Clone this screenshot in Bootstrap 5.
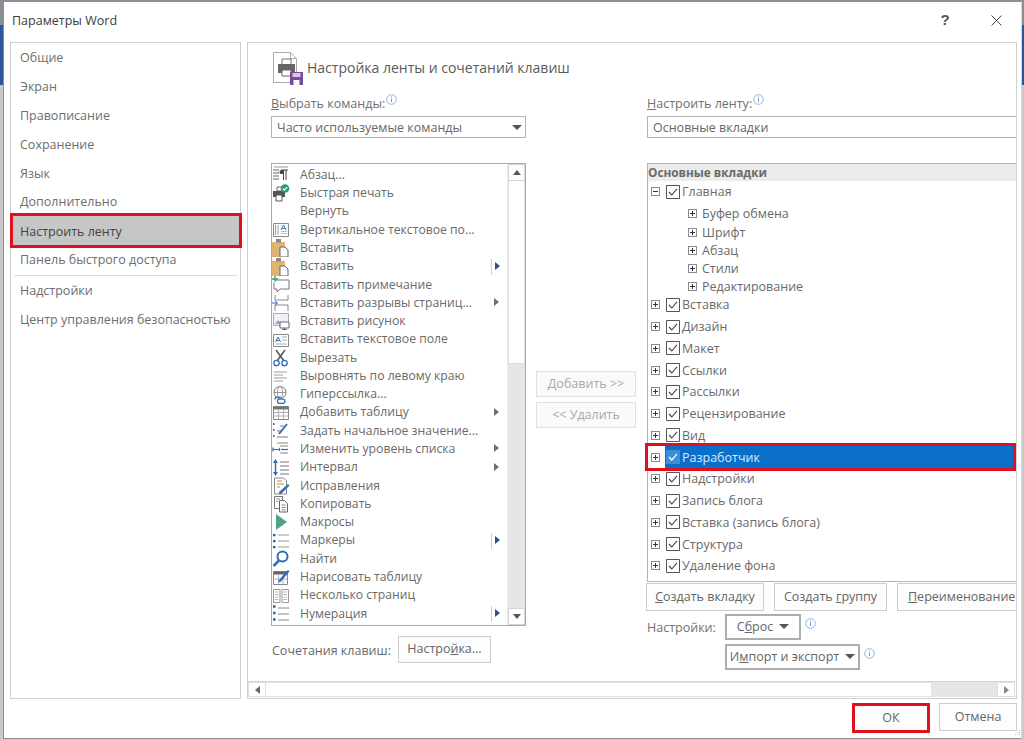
<!DOCTYPE html>
<html lang="ru">
<head>
<meta charset="utf-8">
<title>Параметры Word</title>
<link href="https://cdn.jsdelivr.net/npm/bootstrap@5.3.0/dist/css/bootstrap.min.css" rel="stylesheet">
<style>
html,body{height:740px;overflow:hidden}
body{background:linear-gradient(#8a8f96 0,#8a8f96 25px,#2b579a 25px,#2b579a 85px,#c9c9c9 85px);font-family:"Open Sans","Noto Sans",sans-serif;font-size:12.5px;color:#6a6a6a;line-height:1.2}
.defs{position:absolute;width:0;height:0}
.dlg{position:relative;margin:1px 2px 1px 3px;height:738px;background:#fff;border:1px solid #8f8f8f;border-right-color:#d8d8d8}
.ttl{height:40px;padding:0 0 4px 8px;color:#3c3c3c;font-size:12.5px}
.ttl svg{display:block}
.qm{font-size:15px;color:#555;width:14px;margin-right:39px;text-align:center;font-family:"Liberation Sans",sans-serif}
.closex{margin-right:19px}
.panes{padding-left:6px;height:657px;gap:6px}
.navp{width:231px;border:1px solid #cfcfcf;padding-top:1px}
.navp .list-group-item{border:0;background:transparent;color:#6e6e6e;padding:0 0 0 9px;height:28.9px;line-height:28.9px;border-radius:0;font-size:12.5px}
.navp .list-group-item.sel{background:#c6c6c6;color:#444;outline:3px solid #e2101f;outline-offset:-3px;height:35px;line-height:37px;margin:-4px -1px -2px;padding-left:10px;width:232px;z-index:2}
.navrule{height:1px;background:#dcdcdc;margin:0 3px 1px 3px}
.mainp{width:770px;border:1px solid #cfcfcf;overflow:hidden}
.body-area{padding:7px 0 0 23px;height:639px;overflow:hidden}
.mhead{height:36px;margin-bottom:8px;font-size:14px;color:#5a5a5a;white-space:nowrap;width:400px}
.mhead svg{margin-right:4px;margin-left:1px;flex:none}
.colL{width:255px;flex:none}
.colM{width:100px;flex:none;margin:0 11px 0 10px;padding-top:321px}
.colR{width:370px;flex:none}
.headgap{height:44px}
.lab{height:17px;line-height:19px;font-size:12.5px;color:#707070;margin-bottom:5px}
.info{display:inline-block;vertical-align:3px;margin-left:1px}
.sel-box{height:22px;border:1px solid #b4b4b4;padding:1px 0 0 5px;line-height:20px;color:#666;margin-bottom:25px;background:#fff}
.caret{width:0;height:0;border:5px solid transparent;border-top:5px solid #555;border-bottom:0;display:inline-block}
.sel-box .caret{margin-right:3px}
.cmds{height:463px;border:1px solid #a9a9a9;padding-top:0}
.cmds-items{min-width:0;padding-top:2px}
.cmd{height:18.29px}
.cmd svg{flex:none;width:18px;height:18px;margin-right:10px}
.cmd .ctext{flex:1 1 auto;white-space:nowrap;font-size:12.2px}
.arrowcell{width:16px;flex:none;height:16px}
.arrowcell.split{border-left:1px solid #cfcfcf}
.tri{width:0;height:0;border:4px solid transparent;border-left:5px solid #6f6f6f;border-right:0;display:block;margin-left:3px;margin-top:3px}
.split .tri{border-left-color:#2f4e8f;margin-left:3px}
.sb{width:18px;flex:none;background:#e6e6e6;border-left:1px solid #ededed}
.sb-btn{height:17px;background:#fff;border:1px solid #d5d5d5}
.sb-thumb{height:183px;background:#fff;border:1px solid #dcdcdc;border-top:0}
.tri-up,.tri-dn{width:0;height:0;border:4px solid transparent}
.tri-up{border-bottom:5px solid #555;border-top:0}
.tri-dn{border-top:5px solid #555;border-bottom:0}
.btn.wbtn{--bs-btn-border-radius:0;--bs-btn-font-size:12.5px;--bs-btn-color:#666;--bs-btn-bg:#fdfdfd;--bs-btn-border-color:#cdcdcd;--bs-btn-padding-x:0;--bs-btn-padding-y:0;--bs-btn-line-height:1;white-space:nowrap;flex:none}
.btn.wbtn.off{color:#a9a9a9;background:#fafafa;border-color:#e0e0e0;opacity:1}
.addb{height:26px;width:100px;margin-bottom:5px}
.hot{height:27px;width:93px;margin:10px 0 0 7px}
.keys{padding-left:1px}
.keytxt{margin-top:12px}
.tree{height:419px;border:1px solid #b4b4b4;border-right:0}
.tree-h{height:17px;line-height:17px;background:#ececec;font-weight:700;color:#6a6a6a;font-size:11.8px}
.tr{height:21.75px;position:relative}
.exp{width:9px;height:9px;border:1px solid #8a8a8a;position:relative;flex:none;margin:0 5px 0 3px;background:#fff}
.exp::before{content:"";position:absolute;left:1px;right:1px;top:3px;height:1px;background:#333}
.exp.pl::after{content:"";position:absolute;top:1px;bottom:1px;left:3px;width:1px;background:#333}
.trbody{height:100%;flex:1 1 auto;padding-left:1px}
.chk{width:14px;height:14px;flex:none;margin-right:2px;display:block}
.subs{margin:2px 0 -2px;padding-left:37px}
.subr{height:18.25px}
.tr.picked{outline:3px solid #e2101f;width:365px;z-index:2}
.tr.picked .trbody{background:#0a6fc9;color:#d8ecff}
.rbtns{margin:1px 0 3px -1px;gap:10px}
.rbtns .btn{height:28px}
.r1{width:118px}.r2{width:113px}.r3{width:130px;text-align:left;padding-left:10px!important}
.opts{height:56px}
.opt-l{width:78px;padding-top:6px;color:#707070}
.ddb{height:26px;border:2px solid #adadad!important;background:#fff!important;margin-bottom:4px}
.dd1{width:76px}.dd2{width:135px}
.ddb .caret{margin-left:6px;vertical-align:2px}
.hbar{height:16px;border-top:1px solid #d6d6d6;background:#e6e6e6;margin:0 1px 1px 0}
.hb-l,.hb-r{width:18px;flex:none;height:100%;background:#fff;border:1px solid #dedede}
.hb-t{width:665px;flex:none;background:#fff;border-top:1px solid #e2e2e2;border-bottom:1px solid #e2e2e2}
.tri-l,.tri-r{width:0;height:0;border:4px solid transparent}
.tri-l{border-right:5px solid #666;border-left:0}
.tri-r{border-left:5px solid #888;border-right:0}
.foot{height:38px;padding:4px 4px 0 0;gap:9px;position:relative}
.foot .btn{height:28px;width:78px}
.foot .okb{border:3px solid #e2101f;margin-top:0;height:30px}
.grip{position:absolute;right:0;bottom:1px}
</style>
</head>
<body>
<svg class="defs" aria-hidden="true">
<symbol id="i-para" viewBox="0 0 18 18"><path d="M2 1h14" stroke="#999"/><path d="M1 4h6M1 7h6M1 10h6M1 13h6" stroke="#666"/><path d="M9 4h7M14 4v10M11.500 4v10" stroke="#444" fill="none"/><path d="M9 4h3v4H10a2 2 0 0 1-1-4z" fill="#444"/></symbol>
<symbol id="i-qprint" viewBox="0 0 18 18"><path d="M5 3h5v4H5z" fill="#fff" stroke="#666"/><path d="M1 7h12v6H1z" fill="#555"/><path d="M4 11h6v6H4z" fill="#fff" stroke="#555"/><circle cx="13" cy="4.500" r="4.300" fill="#2e9a7a"/><path d="M10.800 4.600l1.600 1.600 2.800-3" stroke="#fff" fill="none" stroke-width="1.200"/></symbol>
<symbol id="i-vtext" viewBox="0 0 18 18"><path d="M1.500 2.500h15v13h-15z" fill="#fff" stroke="#8b8b8b"/><path d="M3.500 4v10M6 4v10" stroke="#999"/><path d="M9 9l2.500-5 2.500 5M10 7.500h3" stroke="#3f6fb5" fill="none"/><path d="M9 10.500h6M9 12.500h6" stroke="#bbb"/></symbol>
<symbol id="i-paste" viewBox="0 0 18 18"><path d="M0 3h13v15H0z" fill="#e0b46e"/><path d="M4 0h5v3.500H4z" fill="#888"/><path d="M8 8h5l3 3v7H8z" fill="#fff" stroke="#666"/></symbol>
<symbol id="i-comment" viewBox="0 0 18 18"><path d="M4 4h13v9H8l-3 3v-3H2V7" fill="none" stroke="#777"/><path d="M3 0v6M0 3h6" stroke="#3b9c6e" stroke-width="1.300"/></symbol>
<symbol id="i-break" viewBox="0 0 18 18"><path d="M3 1v5h13V1M3 17v-6h13v6" fill="none" stroke="#888"/><path d="M0 9h5" stroke="#2f6db5"/><path d="M3 7l2.500 2L3 11" fill="none" stroke="#2f6db5"/></symbol>
<symbol id="i-pic" viewBox="0 0 18 18"><path d="M1.500 1.500h15v12h-15z" fill="#eef2f7" stroke="#aaa"/><path d="M3 12l3-4 3 3 2-1 2 2z" fill="#8fa9c9"/><path d="M8 10h9v6H8z" fill="#fff" stroke="#666"/><path d="M12.500 16v2M10 17.500h5" stroke="#666"/></symbol>
<symbol id="i-tbox" viewBox="0 0 18 18"><path d="M1.500 3.500h15v12h-15z" fill="#fff" stroke="#8b8b8b"/><path d="M3.500 11l2.500-5 2.500 5M4.500 9.500h3" fill="none" stroke="#2f6db5"/><path d="M10 6h5M10 9h5M3.500 13h11" stroke="#aaa"/></symbol>
<symbol id="i-cut" viewBox="0 0 18 18"><path d="M4 1l8 11M13 1L5 12" stroke="#555" stroke-width="1.500"/><circle cx="4.500" cy="14" r="2.700" fill="none" stroke="#2f6db5" stroke-width="1.300"/><circle cx="12.500" cy="14" r="2.700" fill="none" stroke="#2f6db5" stroke-width="1.300"/></symbol>
<symbol id="i-left" viewBox="0 0 18 18"><path d="M2 5h13M2 8h9M2 11h13M2 14h9" stroke="#9a9a9a"/></symbol>
<symbol id="i-globe" viewBox="0 0 18 18"><circle cx="8" cy="6.500" r="6" fill="none" stroke="#777"/><ellipse cx="8" cy="6.500" rx="2.600" ry="6" fill="none" stroke="#999"/><path d="M2 6.500h12" stroke="#999"/><path d="M3 13.500a2.300 2.300 0 0 1 2.300-2.300h3.500M13 15.500a2.300 2.300 0 0 1-2.300 2H7.500a2.200 2.200 0 0 1-.5-4.300h4a2.200 2.200 0 0 1 2 2.300z" fill="none" stroke="#2f6db5" stroke-width="1.300"/></symbol>
<symbol id="i-table" viewBox="0 0 18 18"><path d="M1.500 2.500h15v13h-15z" fill="#fff" stroke="#888"/><path d="M1.500 2.500h15v3h-15z" fill="#777"/><path d="M1.500 8.500h15M1.500 12h15M6.500 5v10M11.500 5v10" stroke="#b0b0b0"/></symbol>
<symbol id="i-start" viewBox="0 0 18 18"><path d="M1 2h1.500M1 8h1.500M1 14h1.500" stroke="#2f6db5" stroke-width="2"/><path d="M5 15h11M8 4h4M5 9h5" stroke="#777"/><path d="M7 12L15 2" stroke="#2f6db5" stroke-width="2"/></symbol>
<symbol id="i-indent" viewBox="0 0 18 18"><path d="M5 3h11M8 6h8M8 13h8" stroke="#888"/><path d="M1 9.500h6M1 7.500v4" stroke="#2f6db5" fill="none" stroke-width="1.200"/><path d="M9 9.500h7" stroke="#2f6db5" stroke-width="1.200"/><path d="M8 7.500L6 9.500l2 2z" fill="#2f6db5"/></symbol>
<symbol id="i-space" viewBox="0 0 18 18"><path d="M8 3h9M8 7h9M8 11h9M8 15h9" stroke="#777"/><path d="M3.500 2v13" stroke="#2f6db5" stroke-width="1.500"/><path d="M3.500 0L1 4h5zM3.500 17L1 13h5z" fill="#2f6db5"/></symbol>
<symbol id="i-track" viewBox="0 0 18 18"><path d="M2.500 1h9l3 3v13h-12z" fill="#fff" stroke="#888"/><path d="M5 4h5M5 7h7M5 10h3" stroke="#d08a3c"/><path d="M7 15l9-8 1.500 1.500-8.500 8.500H7z" fill="#2f6db5"/></symbol>
<symbol id="i-copy" viewBox="0 0 18 18"><path d="M2.500 1.500h8v12h-8z" fill="#fff" stroke="#777"/><path d="M7.500 5.500h5l3 3v8.500h-8z" fill="#fff" stroke="#666"/><path d="M4 4h4M4 6.500h2M9.500 10h4M9.500 12.500h4M9.500 15h4" stroke="#888"/></symbol>
<symbol id="i-macro" viewBox="0 0 18 18"><path d="M4 1l11 8-11 8z" fill="#4ea584"/></symbol>
<symbol id="i-bul" viewBox="0 0 18 18"><path d="M6 3h11M6 9h11M6 15h11" stroke="#999"/><path d="M1 2h2.500v2.200H1zM1 8h2.500v2.200H1zM1 14h2.500v2.200H1z" fill="#2f5fa5"/></symbol>
<symbol id="i-find" viewBox="0 0 18 18"><circle cx="10.500" cy="6.500" r="5" fill="#fff" stroke="#2f6db5" stroke-width="2"/><path d="M7 10.500L1.500 16" stroke="#2f6db5" stroke-width="2.500"/></symbol>
<symbol id="i-draw" viewBox="0 0 18 18"><path d="M1.500 3.500h14v13h-14z" fill="#fff" stroke="#888"/><path d="M1.500 3.500h14v3h-14z" fill="#666"/><path d="M1.500 11h14M6.500 6v10M11 6v10" stroke="#b0b0b0"/><path d="M6 13L16 2l1.500 1.500L8 14.500z" fill="#2f6db5"/></symbol>
<symbol id="i-pages" viewBox="0 0 18 18"><path d="M1.500 2.500h6.500v13H1.500zM10 2.500h6.500v13H10z" fill="#fff" stroke="#999"/><path d="M3 5h3.500M3 7.500h3.500M3 10h3.500M3 12.500h3.500M11.500 5H15M11.500 7.500H15M11.500 10H15M11.500 12.500H15" stroke="#b5b5b5"/></symbol>
<symbol id="i-num" viewBox="0 0 18 18"><path d="M1 1.500h2.500M1 8h2.500M1 14.500h2.500" stroke="#2f5fa5" stroke-width="2.500"/><path d="M6 3h11M6 9h11M6 15h11" stroke="#888"/></symbol>
<symbol id="i-chk" viewBox="0 0 14 14"><path d="M.5.500h13v13H.5z" fill="#fff" stroke="#555"/><path d="M3 7l2.800 3L11 3.800" fill="none" stroke="#444" stroke-width="1.100"/></symbol>
<symbol id="i-chkw" viewBox="0 0 14 14"><path d="M0 0h14v14H0z" fill="#3d8ed8"/><path d="M3 7l2.800 3L11 3.800" fill="none" stroke="#fff" stroke-width="1.200"/></symbol>
<symbol id="i-info" viewBox="0 0 11 11"><circle cx="5.500" cy="5.500" r="4.800" fill="#fff" stroke="#8fb4dd"/><path d="M5.500 4.500v3.500M5.500 2.500v1" stroke="#6f97c7"/></symbol>
</svg>

<div class="dlg d-flex flex-column">
  <div class="ttl d-flex align-items-center justify-content-between">
    <span>Параметры Word</span>
    <div class="d-flex align-items-center">
      <span class="qm fw-bold">?</span>
      <svg class="closex" width="11" height="11" viewBox="0 0 11 11"><path d="M.5.500l10 10M10.500.500l-10 10" stroke="#444" stroke-width="1"/></svg>
    </div>
  </div>
  <div class="panes d-flex">
    <div class="navp flex-shrink-0">
      <div class="list-group">
        <a class="list-group-item">Общие</a>
        <a class="list-group-item">Экран</a>
        <a class="list-group-item">Правописание</a>
        <a class="list-group-item">Сохранение</a>
        <a class="list-group-item">Язык</a>
        <a class="list-group-item">Дополнительно</a>
        <a class="list-group-item sel">Настроить ленту</a>
        <a class="list-group-item">Панель быстрого доступа</a>
        <div class="navrule"></div>
        <a class="list-group-item">Надстройки</a>
        <a class="list-group-item">Центр управления безопасностью</a>
      </div>
    </div>
    <div class="mainp d-flex flex-column">
      <div class="body-area d-flex">
        <div class="colL">
          <div class="mhead d-flex align-items-center">
            <svg width="31" height="34" viewBox="0 0 31 34"><path d="M1.500 1.500h17l6 6v24h-23z" fill="#fff" stroke="#aaa"/><path d="M18.500 1.500v6h6" fill="none" stroke="#aaa"/><path d="M10 8h9v6h-9z" fill="#fff" stroke="#777"/><path d="M6 13h17v9H6z" fill="#666"/><path d="M10 19h9v6h-9z" fill="#fff" stroke="#666"/><path d="M18 21h13v13H18z" fill="#7a4a9a"/><path d="M20.500 22h8v4h-8z" fill="#d8c8e6"/><path d="M21.500 29h6v5h-6z" fill="#fff"/></svg>
            <span>Настройка ленты и сочетаний клавиш</span>
          </div>
          <div class="lab"><u>В</u>ыбрать команды:<svg class="info" width="11" height="11"><use href="#i-info"/></svg></div>
          <div class="sel-box d-flex align-items-center justify-content-between"><span>Часто используемые команды</span><i class="caret"></i></div>
          <div class="cmds d-flex">
            <div class="cmds-items flex-grow-1">
              <div class="cmd d-flex align-items-center"><svg><use href="#i-para"/></svg><span class="ctext">Абзац...</span></div>
              <div class="cmd d-flex align-items-center"><svg><use href="#i-qprint"/></svg><span class="ctext">Быстрая печать</span></div>
              <div class="cmd d-flex align-items-center"><svg></svg><span class="ctext">Вернуть</span></div>
              <div class="cmd d-flex align-items-center"><svg><use href="#i-vtext"/></svg><span class="ctext">Вертикальное текстовое по...</span></div>
              <div class="cmd d-flex align-items-center"><svg><use href="#i-paste"/></svg><span class="ctext">Вставить</span></div>
              <div class="cmd d-flex align-items-center"><svg><use href="#i-paste"/></svg><span class="ctext">Вставить</span><span class="arrowcell split"><i class="tri"></i></span></div>
              <div class="cmd d-flex align-items-center"><svg><use href="#i-comment"/></svg><span class="ctext">Вставить примечание</span></div>
              <div class="cmd d-flex align-items-center"><svg><use href="#i-break"/></svg><span class="ctext">Вставить разрывы страниц...</span><span class="arrowcell"><i class="tri"></i></span></div>
              <div class="cmd d-flex align-items-center"><svg><use href="#i-pic"/></svg><span class="ctext">Вставить рисунок</span></div>
              <div class="cmd d-flex align-items-center"><svg><use href="#i-tbox"/></svg><span class="ctext">Вставить текстовое поле</span></div>
              <div class="cmd d-flex align-items-center"><svg><use href="#i-cut"/></svg><span class="ctext">Вырезать</span></div>
              <div class="cmd d-flex align-items-center"><svg><use href="#i-left"/></svg><span class="ctext">Выровнять по левому краю</span></div>
              <div class="cmd d-flex align-items-center"><svg><use href="#i-globe"/></svg><span class="ctext">Гиперссылка...</span></div>
              <div class="cmd d-flex align-items-center"><svg><use href="#i-table"/></svg><span class="ctext">Добавить таблицу</span><span class="arrowcell"><i class="tri"></i></span></div>
              <div class="cmd d-flex align-items-center"><svg><use href="#i-start"/></svg><span class="ctext">Задать начальное значение...</span></div>
              <div class="cmd d-flex align-items-center"><svg><use href="#i-indent"/></svg><span class="ctext">Изменить уровень списка</span><span class="arrowcell"><i class="tri"></i></span></div>
              <div class="cmd d-flex align-items-center"><svg><use href="#i-space"/></svg><span class="ctext">Интервал</span><span class="arrowcell"><i class="tri"></i></span></div>
              <div class="cmd d-flex align-items-center"><svg><use href="#i-track"/></svg><span class="ctext">Исправления</span></div>
              <div class="cmd d-flex align-items-center"><svg><use href="#i-copy"/></svg><span class="ctext">Копировать</span></div>
              <div class="cmd d-flex align-items-center"><svg><use href="#i-macro"/></svg><span class="ctext">Макросы</span></div>
              <div class="cmd d-flex align-items-center"><svg><use href="#i-bul"/></svg><span class="ctext">Маркеры</span><span class="arrowcell split"><i class="tri"></i></span></div>
              <div class="cmd d-flex align-items-center"><svg><use href="#i-find"/></svg><span class="ctext">Найти</span></div>
              <div class="cmd d-flex align-items-center"><svg><use href="#i-draw"/></svg><span class="ctext">Нарисовать таблицу</span></div>
              <div class="cmd d-flex align-items-center"><svg><use href="#i-pages"/></svg><span class="ctext">Несколько страниц</span></div>
              <div class="cmd d-flex align-items-center"><svg><use href="#i-num"/></svg><span class="ctext">Нумерация</span><span class="arrowcell split"><i class="tri"></i></span></div>
            </div>
            <div class="sb d-flex flex-column">
              <div class="sb-btn d-flex align-items-center justify-content-center"><i class="tri-up"></i></div>
              <div class="sb-thumb"></div>
              <div class="flex-grow-1"></div>
              <div class="sb-btn d-flex align-items-center justify-content-center"><i class="tri-dn"></i></div>
            </div>
          </div>
          <div class="keys d-flex align-items-center">
            <span class="keytxt">Сочетания клавиш:</span>
            <button type="button" class="btn wbtn hot">Настро<u>й</u>ка...</button>
          </div>
        </div>
        <div class="colM">
          <button type="button" class="btn wbtn off addb d-block">Добавить &gt;&gt;</button>
          <button type="button" class="btn wbtn off addb d-block">&lt;&lt; Удалить</button>
        </div>
        <div class="colR">
          <div class="headgap"></div>
          <div class="lab"><u>Н</u>астроить ленту:<svg class="info" width="11" height="11"><use href="#i-info"/></svg></div>
          <div class="sel-box">Основные вкладки</div>
          <div class="tree">
            <div class="tree-h">Основные вкладки</div>
            <div class="tr d-flex align-items-center"><i class="exp"></i><span class="trbody d-flex align-items-center"><svg class="chk"><use href="#i-chk"/></svg>Главная</span></div>
            <div class="subs">
              <div class="subr d-flex align-items-center"><i class="exp pl"></i>Буфер обмена</div>
              <div class="subr d-flex align-items-center"><i class="exp pl"></i>Шрифт</div>
              <div class="subr d-flex align-items-center"><i class="exp pl"></i>Абзац</div>
              <div class="subr d-flex align-items-center"><i class="exp pl"></i>Стили</div>
              <div class="subr d-flex align-items-center"><i class="exp pl"></i>Редактирование</div>
            </div>
            <div class="tr d-flex align-items-center"><i class="exp pl"></i><span class="trbody d-flex align-items-center"><svg class="chk"><use href="#i-chk"/></svg>Вставка</span></div>
            <div class="tr d-flex align-items-center"><i class="exp pl"></i><span class="trbody d-flex align-items-center"><svg class="chk"><use href="#i-chk"/></svg>Дизайн</span></div>
            <div class="tr d-flex align-items-center"><i class="exp pl"></i><span class="trbody d-flex align-items-center"><svg class="chk"><use href="#i-chk"/></svg>Макет</span></div>
            <div class="tr d-flex align-items-center"><i class="exp pl"></i><span class="trbody d-flex align-items-center"><svg class="chk"><use href="#i-chk"/></svg>Ссылки</span></div>
            <div class="tr d-flex align-items-center"><i class="exp pl"></i><span class="trbody d-flex align-items-center"><svg class="chk"><use href="#i-chk"/></svg>Рассылки</span></div>
            <div class="tr d-flex align-items-center"><i class="exp pl"></i><span class="trbody d-flex align-items-center"><svg class="chk"><use href="#i-chk"/></svg>Рецензирование</span></div>
            <div class="tr d-flex align-items-center"><i class="exp pl"></i><span class="trbody d-flex align-items-center"><svg class="chk"><use href="#i-chk"/></svg>Вид</span></div>
            <div class="tr picked d-flex align-items-center"><i class="exp pl"></i><span class="trbody d-flex align-items-center"><svg class="chk"><use href="#i-chkw"/></svg>Разработчик</span></div>
            <div class="tr d-flex align-items-center"><i class="exp pl"></i><span class="trbody d-flex align-items-center"><svg class="chk"><use href="#i-chk"/></svg>Надстройки</span></div>
            <div class="tr d-flex align-items-center"><i class="exp pl"></i><span class="trbody d-flex align-items-center"><svg class="chk"><use href="#i-chk"/></svg>Запись блога</span></div>
            <div class="tr d-flex align-items-center"><i class="exp pl"></i><span class="trbody d-flex align-items-center"><svg class="chk"><use href="#i-chk"/></svg>Вставка (запись блога)</span></div>
            <div class="tr d-flex align-items-center"><i class="exp pl"></i><span class="trbody d-flex align-items-center"><svg class="chk"><use href="#i-chk"/></svg>Структура</span></div>
            <div class="tr d-flex align-items-center"><i class="exp pl"></i><span class="trbody d-flex align-items-center"><svg class="chk"><use href="#i-chk"/></svg>Удаление фона</span></div>
          </div>
          <div class="rbtns d-flex">
            <button type="button" class="btn wbtn r1"><u>С</u>оздать вкладку</button>
            <button type="button" class="btn wbtn r2">Создать <u>г</u>руппу</button>
            <button type="button" class="btn wbtn r3"><u>П</u>ереименование</button>
          </div>
          <div class="opts d-flex">
            <div class="opt-l">Настройки:</div>
            <div>
              <div class="d-flex">
                <button type="button" class="btn wbtn ddb dd1">С<u>б</u>рос<i class="caret"></i></button>
                <svg class="ms-1 mt-1" width="11" height="11"><use href="#i-info"/></svg>
              </div>
              <div class="d-flex">
                <button type="button" class="btn wbtn ddb dd2">И<u>м</u>порт и экспорт<i class="caret"></i></button>
                <svg class="ms-1 mt-1" width="11" height="11"><use href="#i-info"/></svg>
              </div>
            </div>
          </div>
        </div>
      </div>
      <div class="hbar d-flex">
        <div class="hb-l d-flex align-items-center justify-content-center"><i class="tri-l"></i></div>
        <div class="hb-t"></div>
        <div class="flex-grow-1"></div>
        <div class="hb-r d-flex align-items-center justify-content-center"><i class="tri-r"></i></div>
      </div>
    </div>
  </div>
  <div class="foot d-flex justify-content-end">
    <button type="button" class="btn wbtn okb">ОК</button>
    <button type="button" class="btn wbtn">Отмена</button>
    <svg class="grip" width="7" height="7" viewBox="0 0 7 7"><path d="M5 1h1v1H5zM3 3h1v1H3zM5 3h1v1H5zM1 5h1v1H1zM3 5h1v1H3zM5 5h1v1H5z" fill="#bbb"/></svg>
  </div>
</div>
</body>
</html>
